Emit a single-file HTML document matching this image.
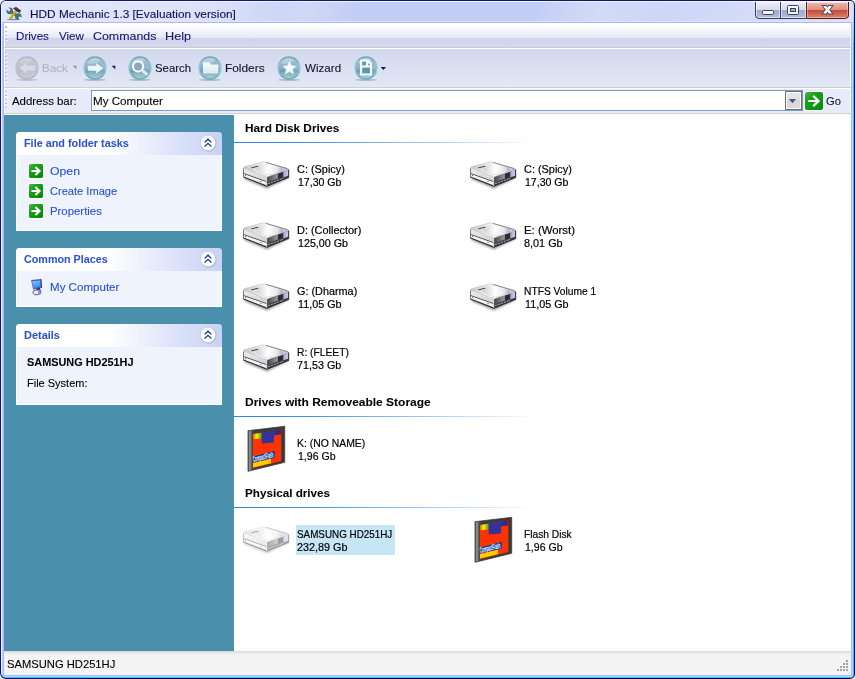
<!DOCTYPE html>
<html lang="en"><head><meta charset="utf-8"><title>HDD Mechanic 1.3 [Evaluation version]</title>
<style>
html,body{margin:0;padding:0}
body{width:855px;height:679px;position:relative;overflow:hidden;background:#fff;font-family:'Liberation Sans',sans-serif}
.a{position:absolute}
.t{position:absolute;white-space:pre;line-height:16px;transform-origin:0 0}
svg{position:absolute;overflow:visible}
.gd{position:absolute;width:2px;height:1px;background:#b9bbc8;box-shadow:1px 1px 0 #f6f7fc}
.ph{position:absolute;left:16px;width:206px;height:23px;background:linear-gradient(90deg,#fff 0%,#fff 45%,#e3e8fb 70%,#c8d2f5 100%);clip-path:polygon(2px 0,204px 0,206px 2px,206px 23px,0 23px,0 2px)}
.pb{position:absolute;left:16px;width:204px;background:#eef3fe;border:1px solid #fff;border-top:none}
.ln{position:absolute;left:234px;width:302px;height:1px;background:linear-gradient(90deg,#2f80e4 0%,#4590e8 25%,#a4caf5 65%,#fff 100%)}
.sd{position:absolute;width:2px;height:2px;background:#a2a2a8}
</style></head><body>
<div class="a" style="left:0px;top:0px;width:855px;height:679px;background:linear-gradient(135deg,#0a1c78 0%,#08186c 50%,#100848 50%,#100848 100%);border-radius:6px 5px 5px 6px"></div>
<div class="a" style="left:1px;top:1px;width:853px;height:677px;background:linear-gradient(180deg,#b8e4fc 0px,#98dafc 20px,#24c6ff 46px,#14c6ff 100%);border-radius:5px 4px 4px 5px"></div>
<div class="a" style="left:1px;top:1px;width:852px;height:676px;background:#f4f6ff;border-radius:5px 3px 3px 5px"></div>
<div class="a" style="left:2px;top:2px;width:851px;height:675px;background:#acb8f8;border-radius:4px 3px 3px 4px"></div>
<div class="a" style="left:2px;top:22px;width:1px;height:653px;background:#bcc6fc"></div>
<div class="a" style="left:852px;top:22px;width:1px;height:654px;background:#c8d0fc"></div>
<div class="a" style="left:3px;top:676px;width:849px;height:1px;background:#c8d0fc"></div>
<div class="a" style="left:2px;top:2px;width:851px;height:20px;border-radius:4px 3px 0 0;background:linear-gradient(90deg,#e2e6fa 0%,#e0e4f9 20%,#d9dff8 27%,#cad2f6 33%,#c3ccf6 40%,#c3ccf6 62%,#ccd4f7 75%,#d5dbf9 88%,#dadffa 100%)"></div>
<div class="a" style="left:2px;top:21px;width:851px;height:1px;background:#dde3fa"></div>
<div class="a" style="left:2px;top:2px;width:851px;height:19px;border-radius:3px 3px 0 0;background:linear-gradient(115deg,rgba(255,255,255,0) 0%,rgba(255,255,255,0) 30%,rgba(255,255,255,.18) 36%,rgba(255,255,255,0) 42%,rgba(255,255,255,0) 62%,rgba(255,255,255,.2) 70%,rgba(255,255,255,0) 78%)"></div>
<div class="a" style="left:4px;top:23px;width:847px;height:652px;background:#fff"></div>
<div class="a" style="left:5px;top:23px;width:845px;height:24px;background:linear-gradient(180deg,#fff 0px,#fdfdff 3px,#e4e8f4 15px,#cfd6eb 15px,#d1d8ec 24px)"></div>
<div class="a" style="left:4px;top:47px;width:847px;height:1px;background:#ccccc8"></div>
<div class="a" style="left:5px;top:49px;width:845px;height:38px;background:linear-gradient(180deg,#d2d8ec,#e3e8f7)"></div>
<div class="a" style="left:4px;top:87px;width:847px;height:1px;background:#d0d0d0"></div>
<div class="a" style="left:5px;top:89px;width:845px;height:24px;background:#e8ecfa"></div>
<div class="a" style="left:4px;top:113px;width:847px;height:1px;background:#d0d0d0"></div>
<div class="a" style="left:4px;top:115px;width:230px;height:536px;background:#4a90ac"></div>
<div class="a" style="left:4px;top:651px;width:847px;height:24px;background:linear-gradient(180deg,#d4d4d4 0px,#e6e6e6 1.5px,#f1f1f1 3.5px,#f4f4f4 5px,#f4f4f4 24px)"></div>
<div class="gd" style="left:5px;top:26px;height:2px"></div>
<div class="gd" style="left:5px;top:31px"></div>
<div class="gd" style="left:5px;top:35px"></div>
<div class="gd" style="left:5px;top:39px"></div>
<div class="gd" style="left:5px;top:52px"></div>
<div class="gd" style="left:5px;top:56px"></div>
<div class="gd" style="left:5px;top:60px"></div>
<div class="gd" style="left:5px;top:64px"></div>
<div class="gd" style="left:5px;top:68px"></div>
<div class="gd" style="left:5px;top:72px"></div>
<div class="gd" style="left:5px;top:76px"></div>
<div class="gd" style="left:5px;top:80px"></div>
<div class="gd" style="left:5px;top:91px"></div>
<div class="gd" style="left:5px;top:95px"></div>
<div class="gd" style="left:5px;top:99px"></div>
<div class="gd" style="left:5px;top:103px"></div>
<div class="gd" style="left:5px;top:107px"></div>
<div class="sd" style="left:846px;top:660px"></div>
<div class="sd" style="left:843px;top:663px"></div>
<div class="sd" style="left:846px;top:663px"></div>
<div class="sd" style="left:840px;top:666px"></div>
<div class="sd" style="left:843px;top:666px"></div>
<div class="sd" style="left:846px;top:666px"></div>
<div class="sd" style="left:837px;top:669px"></div>
<div class="sd" style="left:840px;top:669px"></div>
<div class="sd" style="left:843px;top:669px"></div>
<div class="sd" style="left:846px;top:669px"></div>
<div class="a" style="left:91px;top:90px;width:712px;height:21px;box-sizing:border-box;border:1px solid #7b9cc4;background:#fff"></div>
<div class="a" style="left:785px;top:91px;width:17px;height:19px;box-sizing:border-box;border:1px solid #6e6e72;background:linear-gradient(180deg,#e6e6e6 0%,#e0e0e0 50%,#d6d6d6 50%,#dcdcdc 100%);box-shadow:inset 0 0 0 1px #fff"></div>
<svg style="left:785px;top:91px" width="17" height="19"><path d="M3.9 8.1 L11.1 8.1 L7.5 12.3 Z" fill="#485888"/></svg>
<svg style="left:0;top:0" width="855" height="24" viewBox="0 0 855 24">
<defs>
<linearGradient id="cbA" x1="0" y1="0" x2="0" y2="1"><stop offset="0" stop-color="#eceef6"/><stop offset="0.5" stop-color="#d6dae9"/><stop offset="0.5" stop-color="#9fa8c9"/><stop offset="1" stop-color="#b6bedb"/></linearGradient>
<linearGradient id="cbC" x1="0" y1="0" x2="0" y2="1"><stop offset="0" stop-color="#f0b8ac"/><stop offset="0.5" stop-color="#de8e7e"/><stop offset="0.5" stop-color="#c24a32"/><stop offset="1" stop-color="#dc8470"/></linearGradient>
<clipPath id="cbclip"><path d="M755 2 H849 V15 Q849 19 845 19 H759 Q755 19 755 15 Z"/></clipPath>
</defs>
<g clip-path="url(#cbclip)">
<rect x="755" y="2" width="51" height="16" fill="url(#cbA)"/>
<rect x="806" y="2" width="43" height="16" fill="url(#cbC)"/>
<rect x="756.5" y="1.5" width="23" height="16" fill="none" stroke="#fff" stroke-opacity=".55"/>
<rect x="781.5" y="1.5" width="24" height="16" fill="none" stroke="#fff" stroke-opacity=".55"/>
<rect x="807.5" y="1.5" width="40" height="16" fill="none" stroke="#fff" stroke-opacity=".35"/>
<rect x="756" y="2" width="92" height="1" fill="#fff" opacity=".6"/>
</g>
<path d="M755.5 2 V15 Q755.5 18.5 759 18.5 H806" fill="none" stroke="#3a3e58" stroke-width="1"/>
<path d="M780.5 2 V18" stroke="#3a3e58" stroke-width="1"/>
<path d="M806.5 2 V18.5 H845 Q848.5 18.5 848.5 15 V2" fill="none" stroke="#5a1c14" stroke-width="1"/>
<!-- min glyph -->
<rect x="762.5" y="10.5" width="11" height="4" rx="1" fill="#f6f5ec" stroke="#3a4060"/>
<!-- max glyph -->
<rect x="787.5" y="5.5" width="11" height="9" rx="1" fill="#fafafa" stroke="#3a4060"/>
<rect x="790.5" y="8.5" width="5" height="3" fill="#a4acd0" stroke="#3a4060"/>
<!-- close glyph -->
<clipPath id="xclip"><rect x="819" y="5" width="18" height="9.6"/></clipPath><clipPath id="xclip2"><rect x="819" y="6" width="18" height="7.6"/></clipPath>
<g clip-path="url(#xclip)"><path d="M823 4 L832 15.4 M832 4 L823 15.4" stroke="#44465e" stroke-width="4.3"/></g>
<g clip-path="url(#xclip2)"><path d="M823 4 L832 15.4 M832 4 L823 15.4" stroke="#fff" stroke-width="2.5"/></g>
</svg>
<svg style="left:4px;top:4px" width="20" height="18" viewBox="4 4 20 18">
<defs><linearGradient id="hh" x1="0" y1="0" x2="1" y2="1"><stop offset="0" stop-color="#e8c030"/><stop offset=".5" stop-color="#d2a512"/><stop offset="1" stop-color="#a88408"/></linearGradient></defs>
<ellipse cx="13.4" cy="19.5" rx="6.8" ry=".7" fill="#4a6a9c" opacity=".7"/>
<!-- wrench -->
<g fill="#3e7282"><circle cx="9.7" cy="10.8" r="3.35"/><circle cx="18.3" cy="16.5" r="3.3"/><path d="M9.7 10.8 L18.3 16.5" stroke="#3e7282" stroke-width="2.7"/></g>
<g fill="#e1e5fa"><rect x="-1.35" y="-.6" width="2.7" height="5.4" rx="1.2" transform="translate(9.4,10.4) rotate(135)"/><rect x="-1.25" y="-.2" width="2.5" height="5" rx="1.1" transform="translate(18.9,17.2) rotate(-52)"/></g>
<!-- hammer handle -->
<path d="M15.3 10 L17.6 11.3 L11 19.6 L8.8 18.6 Z" fill="url(#hh)"/>
<!-- hammer head -->
<path d="M13.1 8.3 L16 6.9 L21.1 10.6 L19.7 12.9 L16.5 11.2 L14.7 9.7 Z" fill="#3a3a3a"/>
<path d="M13.6 8.2 L16 7.1 L18 8.6" fill="none" stroke="#6a6a6a" stroke-width=".5"/>
</svg>
<svg style="left:13px;top:53.5px" width="28" height="28" viewBox="13 53.5 28 28">
<defs>
<linearGradient id="rgb" x1="0" y1="0" x2="1" y2="0"><stop offset="0" stop-color="#c3c5d2"/><stop offset=".22" stop-color="#b5b7c4"/><stop offset=".78" stop-color="#b5b7c4"/><stop offset="1" stop-color="#c3c5d2"/></linearGradient>
<linearGradient id="igb" x1="0" y1="0" x2="0" y2="1"><stop offset="0" stop-color="#c6c8d3"/><stop offset=".52" stop-color="#bec0cc"/><stop offset=".64" stop-color="#b9bbc8"/><stop offset="1" stop-color="#c4c6d2"/></linearGradient>
<clipPath id="icb"><circle cx="27" cy="67.5" r="10"/></clipPath>
</defs>
<ellipse cx="27" cy="79.4" rx="11" ry=".8" fill="#b9bdca"/>
<circle cx="27" cy="67.5" r="11.8" fill="url(#rgb)"/>
<circle cx="27" cy="67.5" r="10.3" fill="url(#igb)"/>
<g clip-path="url(#icb)"><ellipse cx="23.5" cy="58.0" rx="9" ry="5.2" fill="#fff" opacity=".12"/>
<path d="M16 74.5 L38 62.5 L38 78.5 L16 78.5 Z" fill="#fff" opacity=".10"/></g>
<path d="M19.5 67.7 L26.6 62.3 L26.6 65.1 L35 65.1 L35 70.1 L26.6 70.1 L26.6 73.1 Z" fill="#d8dae4"/>
</svg>
<svg style="left:72px;top:65px" width="6" height="6"><path d="M0.8 0.8 L4.4 0.8 L4.4 4.2 Z" fill="#8c8c98"/></svg>
<svg style="left:81px;top:53.5px" width="28" height="28" viewBox="81 53.5 28 28">
<defs>
<linearGradient id="rgf" x1="0" y1="0" x2="1" y2="0"><stop offset="0" stop-color="#9cd4de"/><stop offset=".22" stop-color="#73acb9"/><stop offset=".78" stop-color="#73acb9"/><stop offset="1" stop-color="#9cd4de"/></linearGradient>
<linearGradient id="igf" x1="0" y1="0" x2="0" y2="1"><stop offset="0" stop-color="#a4c3d5"/><stop offset=".52" stop-color="#8eaec6"/><stop offset=".64" stop-color="#6a9fb4"/><stop offset="1" stop-color="#9ac8d2"/></linearGradient>
<clipPath id="icf"><circle cx="95" cy="67.5" r="10"/></clipPath>
</defs>
<ellipse cx="95" cy="79.4" rx="11" ry=".8" fill="#9cb6be"/>
<circle cx="95" cy="67.5" r="11.8" fill="url(#rgf)"/>
<circle cx="95" cy="67.5" r="10.3" fill="url(#igf)"/>
<g clip-path="url(#icf)"><ellipse cx="91.5" cy="58.0" rx="9" ry="5.2" fill="#fff" opacity=".26"/>
<path d="M84 74.5 L106 62.5 L106 78.5 L84 78.5 Z" fill="#fff" opacity=".10"/></g>
<path d="M103.3 67.7 L96.2 62.5 L96.2 65.2 L87.8 65.2 L87.8 70.2 L96.2 70.2 L96.2 73.0 Z" fill="#f0f6f8"/>
</svg>
<svg style="left:111px;top:65px" width="6" height="6"><path d="M0.6 0.8 L4.3 0.8 L4.3 4.3 Z" fill="#14145c"/></svg>
<svg style="left:125.9px;top:53.5px" width="28" height="28" viewBox="125.9 53.5 28 28">
<defs>
<linearGradient id="rgs" x1="0" y1="0" x2="1" y2="0"><stop offset="0" stop-color="#9cd4de"/><stop offset=".22" stop-color="#73acb9"/><stop offset=".78" stop-color="#73acb9"/><stop offset="1" stop-color="#9cd4de"/></linearGradient>
<linearGradient id="igs" x1="0" y1="0" x2="0" y2="1"><stop offset="0" stop-color="#a4c3d5"/><stop offset=".52" stop-color="#8eaec6"/><stop offset=".64" stop-color="#6a9fb4"/><stop offset="1" stop-color="#9ac8d2"/></linearGradient>
<clipPath id="ics"><circle cx="139.9" cy="67.5" r="10"/></clipPath>
</defs>
<ellipse cx="139.9" cy="79.4" rx="11" ry=".8" fill="#9cb6be"/>
<circle cx="139.9" cy="67.5" r="11.8" fill="url(#rgs)"/>
<circle cx="139.9" cy="67.5" r="10.3" fill="url(#igs)"/>
<g clip-path="url(#ics)"><ellipse cx="136.4" cy="58.0" rx="9" ry="5.2" fill="#fff" opacity=".26"/>
<path d="M128.9 74.5 L150.9 62.5 L150.9 78.5 L128.9 78.5 Z" fill="#fff" opacity=".10"/></g>
<circle cx="138.0" cy="65.9" r="5.05" fill="#86a7c3" stroke="#f8fbfc" stroke-width="2.1"/><path d="M142.5 70.1 L147.1 74.3" stroke="#dcecf0" stroke-width="2.9" stroke-linecap="butt"/>
</svg>
<svg style="left:195.9px;top:53.5px" width="28" height="28" viewBox="195.9 53.5 28 28">
<defs>
<linearGradient id="rgo" x1="0" y1="0" x2="1" y2="0"><stop offset="0" stop-color="#9cd4de"/><stop offset=".22" stop-color="#73acb9"/><stop offset=".78" stop-color="#73acb9"/><stop offset="1" stop-color="#9cd4de"/></linearGradient>
<linearGradient id="igo" x1="0" y1="0" x2="0" y2="1"><stop offset="0" stop-color="#a4c3d5"/><stop offset=".52" stop-color="#8eaec6"/><stop offset=".64" stop-color="#6a9fb4"/><stop offset="1" stop-color="#9ac8d2"/></linearGradient>
<clipPath id="ico"><circle cx="209.9" cy="67.5" r="10"/></clipPath>
</defs>
<ellipse cx="209.9" cy="79.4" rx="11" ry=".8" fill="#9cb6be"/>
<circle cx="209.9" cy="67.5" r="11.8" fill="url(#rgo)"/>
<circle cx="209.9" cy="67.5" r="10.3" fill="url(#igo)"/>
<g clip-path="url(#ico)"><ellipse cx="206.4" cy="58.0" rx="9" ry="5.2" fill="#fff" opacity=".26"/>
<path d="M198.9 74.5 L220.9 62.5 L220.9 78.5 L198.9 78.5 Z" fill="#fff" opacity=".10"/></g>
<defs><linearGradient id="fo" x1="0" y1="0" x2="0" y2="1"><stop offset="0" stop-color="#f8fbfc"/><stop offset="1" stop-color="#dde9ed"/></linearGradient></defs><path d="M202.9 62.1 L209.3 62.1 L211.1 64.0 L218.1 64.0 L218.1 72.9 L202.9 72.9 Z" fill="url(#fo)"/>
</svg>
<svg style="left:274.9px;top:53.5px" width="28" height="28" viewBox="274.9 53.5 28 28">
<defs>
<linearGradient id="rgw" x1="0" y1="0" x2="1" y2="0"><stop offset="0" stop-color="#9cd4de"/><stop offset=".22" stop-color="#73acb9"/><stop offset=".78" stop-color="#73acb9"/><stop offset="1" stop-color="#9cd4de"/></linearGradient>
<linearGradient id="igw" x1="0" y1="0" x2="0" y2="1"><stop offset="0" stop-color="#a4c3d5"/><stop offset=".52" stop-color="#8eaec6"/><stop offset=".64" stop-color="#6a9fb4"/><stop offset="1" stop-color="#9ac8d2"/></linearGradient>
<clipPath id="icw"><circle cx="288.9" cy="67.5" r="10"/></clipPath>
</defs>
<ellipse cx="288.9" cy="79.4" rx="11" ry=".8" fill="#9cb6be"/>
<circle cx="288.9" cy="67.5" r="11.8" fill="url(#rgw)"/>
<circle cx="288.9" cy="67.5" r="10.3" fill="url(#igw)"/>
<g clip-path="url(#icw)"><ellipse cx="285.4" cy="58.0" rx="9" ry="5.2" fill="#fff" opacity=".26"/>
<path d="M277.9 74.5 L299.9 62.5 L299.9 78.5 L277.9 78.5 Z" fill="#fff" opacity=".10"/></g>
<polygon points="289.35,61.10 291.26,65.17 295.72,65.73 292.44,68.80 293.29,73.22 289.35,71.05 285.41,73.22 286.26,68.80 282.98,65.73 287.44,65.17" fill="#f2f7f9" stroke="#f2f7f9" stroke-width=".6" stroke-linejoin="round"/>
</svg>
<svg style="left:351.9px;top:53.5px" width="28" height="28" viewBox="351.9 53.5 28 28">
<defs>
<linearGradient id="rgv" x1="0" y1="0" x2="1" y2="0"><stop offset="0" stop-color="#9cd4de"/><stop offset=".22" stop-color="#73acb9"/><stop offset=".78" stop-color="#73acb9"/><stop offset="1" stop-color="#9cd4de"/></linearGradient>
<linearGradient id="igv" x1="0" y1="0" x2="0" y2="1"><stop offset="0" stop-color="#a4c3d5"/><stop offset=".52" stop-color="#8eaec6"/><stop offset=".64" stop-color="#6a9fb4"/><stop offset="1" stop-color="#9ac8d2"/></linearGradient>
<clipPath id="icv"><circle cx="365.9" cy="67.5" r="10"/></clipPath>
</defs>
<ellipse cx="365.9" cy="79.4" rx="11" ry=".8" fill="#9cb6be"/>
<circle cx="365.9" cy="67.5" r="11.8" fill="url(#rgv)"/>
<circle cx="365.9" cy="67.5" r="10.3" fill="url(#igv)"/>
<g clip-path="url(#icv)"><ellipse cx="362.4" cy="58.0" rx="9" ry="5.2" fill="#fff" opacity=".26"/>
<path d="M354.9 74.5 L376.9 62.5 L376.9 78.5 L354.9 78.5 Z" fill="#fff" opacity=".10"/></g>
<path d="M359.9 58.9 L368.29999999999995 58.9 L371.9 62.4 L371.9 74.9 L359.9 74.9 Z" fill="#f4f8fa"/><rect x="362.09999999999997" y="61.1" width="3.8" height="3.8" fill="#6098ac"/><rect x="367.9" y="63.1" width="2.1" height="1.9" fill="#88a8c0"/><rect x="362.09999999999997" y="67.1" width="7.8" height="5.8" fill="#5c98ac"/>
</svg>
<svg style="left:380px;top:66px" width="7" height="5"><path d="M0.7 1.1 L6 1.1 L3.35 4.1 Z" fill="#14145c"/></svg>
<svg style="left:805px;top:92px" width="18" height="18" viewBox="0 0 16 16">
<defs><linearGradient id="gggo" x1="0" y1="0" x2="1" y2="1"><stop offset="0" stop-color="#52b452"/><stop offset=".35" stop-color="#18a018"/><stop offset="1" stop-color="#068806"/></linearGradient></defs>
<rect x="-0.71" y="-0.71" width="17.42" height="17.42" rx="2.6" fill="#fff" opacity=".85"/>
<rect x="0" y="0" width="16" height="16" rx="1.7" fill="url(#gggo)"/>
<path d="M2.8 8 L11.8 8" stroke="#fff" stroke-width="1.7"/><path d="M7.3 3.5 L12 8 L7.3 12.5" fill="none" stroke="#fff" stroke-width="2.0"/>
</svg>
<div class="ph" style="top:132px"></div>
<div class="pb" style="top:155px;height:75px"></div>
<svg style="left:197.7px;top:133.2px" width="20" height="20" viewBox="197.7 133.2 20 20">
<circle cx="208.2" cy="143.89999999999998" r="8" fill="#9aa0c8" opacity=".6"/>
<circle cx="207.7" cy="143.2" r="7.6" fill="#fff" stroke="#c0c4e0" stroke-width=".5"/>
<path d="M204.29999999999998 142.6 L207.7 139.39999999999998 L211.1 142.6 M204.29999999999998 146.79999999999998 L207.7 143.6 L211.1 146.79999999999998" fill="none" stroke="#10309c" stroke-width="1.3"/>
</svg>
<div class="ph" style="top:248px"></div>
<div class="pb" style="top:271px;height:35px"></div>
<svg style="left:197.7px;top:249.2px" width="20" height="20" viewBox="197.7 249.2 20 20">
<circle cx="208.2" cy="259.9" r="8" fill="#9aa0c8" opacity=".6"/>
<circle cx="207.7" cy="259.2" r="7.6" fill="#fff" stroke="#c0c4e0" stroke-width=".5"/>
<path d="M204.29999999999998 258.59999999999997 L207.7 255.39999999999998 L211.1 258.59999999999997 M204.29999999999998 262.8 L207.7 259.59999999999997 L211.1 262.8" fill="none" stroke="#10309c" stroke-width="1.3"/>
</svg>
<div class="ph" style="top:324px"></div>
<div class="pb" style="top:347px;height:57px"></div>
<svg style="left:197.7px;top:325.2px" width="20" height="20" viewBox="197.7 325.2 20 20">
<circle cx="208.2" cy="335.9" r="8" fill="#9aa0c8" opacity=".6"/>
<circle cx="207.7" cy="335.2" r="7.6" fill="#fff" stroke="#c0c4e0" stroke-width=".5"/>
<path d="M204.29999999999998 334.59999999999997 L207.7 331.4 L211.1 334.59999999999997 M204.29999999999998 338.8 L207.7 335.59999999999997 L211.1 338.8" fill="none" stroke="#10309c" stroke-width="1.3"/>
</svg>
<svg style="left:29px;top:164px" width="14" height="14" viewBox="0 0 16 16">
<defs><linearGradient id="ggp0" x1="0" y1="0" x2="1" y2="1"><stop offset="0" stop-color="#52b452"/><stop offset=".35" stop-color="#18a018"/><stop offset="1" stop-color="#068806"/></linearGradient></defs>
<rect x="-1.14" y="-1.14" width="18.29" height="18.29" rx="2.6" fill="#fff" opacity=".85"/>
<rect x="0" y="0" width="16" height="16" rx="1.7" fill="url(#ggp0)"/>
<path d="M2.8 8 L11.8 8" stroke="#fff" stroke-width="2.3"/><path d="M7.3 3.5 L12 8 L7.3 12.5" fill="none" stroke="#fff" stroke-width="2.5"/>
</svg>
<svg style="left:29px;top:184px" width="14" height="14" viewBox="0 0 16 16">
<defs><linearGradient id="ggp1" x1="0" y1="0" x2="1" y2="1"><stop offset="0" stop-color="#52b452"/><stop offset=".35" stop-color="#18a018"/><stop offset="1" stop-color="#068806"/></linearGradient></defs>
<rect x="-1.14" y="-1.14" width="18.29" height="18.29" rx="2.6" fill="#fff" opacity=".85"/>
<rect x="0" y="0" width="16" height="16" rx="1.7" fill="url(#ggp1)"/>
<path d="M2.8 8 L11.8 8" stroke="#fff" stroke-width="2.3"/><path d="M7.3 3.5 L12 8 L7.3 12.5" fill="none" stroke="#fff" stroke-width="2.5"/>
</svg>
<svg style="left:29px;top:204px" width="14" height="14" viewBox="0 0 16 16">
<defs><linearGradient id="ggp2" x1="0" y1="0" x2="1" y2="1"><stop offset="0" stop-color="#52b452"/><stop offset=".35" stop-color="#18a018"/><stop offset="1" stop-color="#068806"/></linearGradient></defs>
<rect x="-1.14" y="-1.14" width="18.29" height="18.29" rx="2.6" fill="#fff" opacity=".85"/>
<rect x="0" y="0" width="16" height="16" rx="1.7" fill="url(#ggp2)"/>
<path d="M2.8 8 L11.8 8" stroke="#fff" stroke-width="2.3"/><path d="M7.3 3.5 L12 8 L7.3 12.5" fill="none" stroke="#fff" stroke-width="2.5"/>
</svg>
<svg style="left:29px;top:277px" width="16" height="20" viewBox="29 277 16 20">
<defs><linearGradient id="mcs" x1="0" y1="0" x2=".4" y2="1"><stop offset="0" stop-color="#b0e8ff"/><stop offset=".35" stop-color="#58b4ff"/><stop offset="1" stop-color="#2c90f8"/></linearGradient></defs>
<path d="M31.1 280 L41.1 279.1 L41.9 287.6 L33.1 289.4 Z" fill="#5c5ca4"/>
<path d="M40.3 279.2 L41.3 279.1 L42 287.6 L41 287.9 Z" fill="#352c68"/>
<path d="M32 281.4 L40.2 280.4 L40.7 286.3 L33.8 288.6 Z" fill="url(#mcs)"/>
<path d="M36.4 288 L40.2 287.4 L40.4 291 L36.6 291 Z" fill="#3c3c8c"/>
<path d="M33 291.6 Q33.2 290.1 36 290 L39 289.9 L40.6 290.2 L40.7 293.6 Q38 295.3 34.6 294.7 Q32.6 293.6 33 291.6 Z" fill="#e4e4ee" stroke="#40306c" stroke-width=".8"/>
<path d="M38 290.4 L40.4 290.3 L40.5 293.4 L38.4 294.4 Z" fill="#8c8cc0"/>
</svg>
<div class="ln" style="top:142px"></div>
<div class="ln" style="top:416px"></div>
<div class="ln" style="top:507px"></div>
<div class="a" style="left:296px;top:525px;width:99px;height:30px;background:#c6e6f6"></div>
<svg style="left:242px;top:150px" width="48" height="48" viewBox="0 0 48 48">
<defs>
<linearGradient id="hth0" x1="0" y1="0" x2="1" y2="0"><stop offset="0" stop-color="#c4c4c4"/><stop offset=".3" stop-color="#e4e4e4"/><stop offset=".55" stop-color="#ffffff"/><stop offset=".8" stop-color="#e0e0e4"/><stop offset="1" stop-color="#b8b8c4"/></linearGradient>
<linearGradient id="hph0" x1="0" y1="0" x2="1" y2="0"><stop offset="0" stop-color="#d0d0d0"/><stop offset=".45" stop-color="#ffffff"/><stop offset=".8" stop-color="#e8e8ec"/><stop offset="1" stop-color="#b0b0d0"/></linearGradient>
<linearGradient id="hlh0" x1="0" y1="0" x2="0" y2="1"><stop offset="0" stop-color="#f0f0f0"/><stop offset="1" stop-color="#c4c4c4"/></linearGradient>
<linearGradient id="hdh0" x1="0" y1="0" x2="1" y2="0"><stop offset="0" stop-color="#464646"/><stop offset=".5" stop-color="#707070"/><stop offset="1" stop-color="#9c9c9c"/></linearGradient><linearGradient id="hvh0" x1="0" y1="0" x2="1" y2="0"><stop offset="0" stop-color="#9a9ad6"/><stop offset="1" stop-color="#d6d6f6"/></linearGradient>
<filter id="hbh0" x="-20%" y="-20%" width="140%" height="140%"><feGaussianBlur stdDeviation="1.1"/></filter>
<clipPath id="hch0"><path d="M1.6 18 Q1.6 17 3 16.6 L20 12.2 Q21.6 11.8 23 12.2 L45.4 18.6 Q46.8 19.2 45.6 19.8 L25.8 26.6 Q24.6 27 23.4 26.6 Z"/></clipPath>
</defs>
<path d="M3 26.5 L25 35.5 L46.5 26 L46.5 28 L25 38.6 L2 29 Z" fill="#000" opacity=".4" filter="url(#hbh0)"/>
<!-- left face -->
<path d="M1.4 18 L24.7 26.7 L24.7 36.2 L1.4 27.2 Z" fill="url(#hlh0)"/>
<path d="M1.4 23 L24.7 31.3 L24.7 32.2 L1.4 23.9 Z" fill="#484848"/>
<path d="M1.4 23.9 L24.7 32.2 L24.7 35.4 L1.4 26.4 Z" fill="#f2f2f2"/>
<!-- right face -->
<path d="M24.7 26.7 L46.9 19.3 L46.9 27.2 L24.7 36.2 Z" fill="#3c3c3c"/>
<path d="M25.4 27.2 L35.8 23.7 L35.8 28.4 L25.6 32.2 Z" fill="url(#hdh0)"/>
<path d="M36.2 23.4 L40.7 21.9 L40.7 26.7 L36.2 28.2 Z" fill="#2c2c2c"/>
<path d="M41.2 21.7 L45.9 20 L45.9 25.8 L41.2 27.6 Z" fill="url(#hvh0)"/>
<path d="M25.8 33.2 L41 28.1 L41 29 L25.8 34.2 Z" fill="#a4a4d8"/>
<path d="M28 32.3 l.9 -.3 l0 1.4 l-.9 .3 Z M31 31.3 l.9 -.3 l0 1.4 l-.9 .3 Z M34 30.3 l.9 -.3 l0 1.4 l-.9 .3 Z M37 29.3 l.9 -.3 l0 1.4 l-.9 .3 Z" fill="#3c3c3c"/>
<!-- top face -->
<path d="M1.6 18 Q1.6 17 3 16.6 L20 12.2 Q21.6 11.8 23 12.2 L45.4 18.6 Q46.8 19.2 45.6 19.8 L25.8 26.6 Q24.6 27 23.4 26.6 Z" fill="url(#hth0)"/>
<g clip-path="url(#hch0)"><ellipse cx="28.3" cy="19.5" rx="13" ry="5.4" fill="#a8a8cc" opacity=".55" transform="rotate(4 27.5 19.2)"/><ellipse cx="27.3" cy="19.1" rx="13" ry="5.4" fill="url(#hph0)" transform="rotate(4 27.5 19.2)"/></g>
<path d="M1.6 18 Q1.6 17 3 16.6 L20 12.2 Q21.6 11.8 23 12.2 L45.4 18.6 Q46.8 19.2 45.6 19.8 L25.8 26.6 Q24.6 27 23.4 26.6 Z" fill="none" stroke="#c4c4c8" stroke-width=".7"/>
<path d="M9 17.6 L15.8 15.8 L16.6 16.4 L9.8 18.3 Z" fill="#3c3c3c"/>
<!-- outlines -->
<path d="M1.4 27 L24.7 36.1 L46.9 27.2" fill="none" stroke="#303030" stroke-width="1.2" stroke-linejoin="round"/><path d="M1.5 18.4 L1.5 27" fill="none" stroke="#5a5a5a" stroke-width=".8"/><path d="M46.7 19.6 L46.7 27" stroke="#3c3c3c" stroke-width=".9"/><path d="M24 12.4 L45.6 18.7" stroke="#6a6a6a" stroke-width=".7"/>
<path d="M24.7 27 L24.7 36" stroke="#e8e8f8" stroke-width=".8"/>
<circle cx="3.4" cy="25.4" r=".5" fill="#333"/><circle cx="19" cy="31.6" r=".5" fill="#333"/><circle cx="23.6" cy="25.6" r=".4" fill="#777"/>
</svg>
<svg style="left:469px;top:150px" width="48" height="48" viewBox="0 0 48 48">
<defs>
<linearGradient id="hth1" x1="0" y1="0" x2="1" y2="0"><stop offset="0" stop-color="#c4c4c4"/><stop offset=".3" stop-color="#e4e4e4"/><stop offset=".55" stop-color="#ffffff"/><stop offset=".8" stop-color="#e0e0e4"/><stop offset="1" stop-color="#b8b8c4"/></linearGradient>
<linearGradient id="hph1" x1="0" y1="0" x2="1" y2="0"><stop offset="0" stop-color="#d0d0d0"/><stop offset=".45" stop-color="#ffffff"/><stop offset=".8" stop-color="#e8e8ec"/><stop offset="1" stop-color="#b0b0d0"/></linearGradient>
<linearGradient id="hlh1" x1="0" y1="0" x2="0" y2="1"><stop offset="0" stop-color="#f0f0f0"/><stop offset="1" stop-color="#c4c4c4"/></linearGradient>
<linearGradient id="hdh1" x1="0" y1="0" x2="1" y2="0"><stop offset="0" stop-color="#464646"/><stop offset=".5" stop-color="#707070"/><stop offset="1" stop-color="#9c9c9c"/></linearGradient><linearGradient id="hvh1" x1="0" y1="0" x2="1" y2="0"><stop offset="0" stop-color="#9a9ad6"/><stop offset="1" stop-color="#d6d6f6"/></linearGradient>
<filter id="hbh1" x="-20%" y="-20%" width="140%" height="140%"><feGaussianBlur stdDeviation="1.1"/></filter>
<clipPath id="hch1"><path d="M1.6 18 Q1.6 17 3 16.6 L20 12.2 Q21.6 11.8 23 12.2 L45.4 18.6 Q46.8 19.2 45.6 19.8 L25.8 26.6 Q24.6 27 23.4 26.6 Z"/></clipPath>
</defs>
<path d="M3 26.5 L25 35.5 L46.5 26 L46.5 28 L25 38.6 L2 29 Z" fill="#000" opacity=".4" filter="url(#hbh1)"/>
<!-- left face -->
<path d="M1.4 18 L24.7 26.7 L24.7 36.2 L1.4 27.2 Z" fill="url(#hlh1)"/>
<path d="M1.4 23 L24.7 31.3 L24.7 32.2 L1.4 23.9 Z" fill="#484848"/>
<path d="M1.4 23.9 L24.7 32.2 L24.7 35.4 L1.4 26.4 Z" fill="#f2f2f2"/>
<!-- right face -->
<path d="M24.7 26.7 L46.9 19.3 L46.9 27.2 L24.7 36.2 Z" fill="#3c3c3c"/>
<path d="M25.4 27.2 L35.8 23.7 L35.8 28.4 L25.6 32.2 Z" fill="url(#hdh1)"/>
<path d="M36.2 23.4 L40.7 21.9 L40.7 26.7 L36.2 28.2 Z" fill="#2c2c2c"/>
<path d="M41.2 21.7 L45.9 20 L45.9 25.8 L41.2 27.6 Z" fill="url(#hvh1)"/>
<path d="M25.8 33.2 L41 28.1 L41 29 L25.8 34.2 Z" fill="#a4a4d8"/>
<path d="M28 32.3 l.9 -.3 l0 1.4 l-.9 .3 Z M31 31.3 l.9 -.3 l0 1.4 l-.9 .3 Z M34 30.3 l.9 -.3 l0 1.4 l-.9 .3 Z M37 29.3 l.9 -.3 l0 1.4 l-.9 .3 Z" fill="#3c3c3c"/>
<!-- top face -->
<path d="M1.6 18 Q1.6 17 3 16.6 L20 12.2 Q21.6 11.8 23 12.2 L45.4 18.6 Q46.8 19.2 45.6 19.8 L25.8 26.6 Q24.6 27 23.4 26.6 Z" fill="url(#hth1)"/>
<g clip-path="url(#hch1)"><ellipse cx="28.3" cy="19.5" rx="13" ry="5.4" fill="#a8a8cc" opacity=".55" transform="rotate(4 27.5 19.2)"/><ellipse cx="27.3" cy="19.1" rx="13" ry="5.4" fill="url(#hph1)" transform="rotate(4 27.5 19.2)"/></g>
<path d="M1.6 18 Q1.6 17 3 16.6 L20 12.2 Q21.6 11.8 23 12.2 L45.4 18.6 Q46.8 19.2 45.6 19.8 L25.8 26.6 Q24.6 27 23.4 26.6 Z" fill="none" stroke="#c4c4c8" stroke-width=".7"/>
<path d="M9 17.6 L15.8 15.8 L16.6 16.4 L9.8 18.3 Z" fill="#3c3c3c"/>
<!-- outlines -->
<path d="M1.4 27 L24.7 36.1 L46.9 27.2" fill="none" stroke="#303030" stroke-width="1.2" stroke-linejoin="round"/><path d="M1.5 18.4 L1.5 27" fill="none" stroke="#5a5a5a" stroke-width=".8"/><path d="M46.7 19.6 L46.7 27" stroke="#3c3c3c" stroke-width=".9"/><path d="M24 12.4 L45.6 18.7" stroke="#6a6a6a" stroke-width=".7"/>
<path d="M24.7 27 L24.7 36" stroke="#e8e8f8" stroke-width=".8"/>
<circle cx="3.4" cy="25.4" r=".5" fill="#333"/><circle cx="19" cy="31.6" r=".5" fill="#333"/><circle cx="23.6" cy="25.6" r=".4" fill="#777"/>
</svg>
<svg style="left:242px;top:211px" width="48" height="48" viewBox="0 0 48 48">
<defs>
<linearGradient id="hth2" x1="0" y1="0" x2="1" y2="0"><stop offset="0" stop-color="#c4c4c4"/><stop offset=".3" stop-color="#e4e4e4"/><stop offset=".55" stop-color="#ffffff"/><stop offset=".8" stop-color="#e0e0e4"/><stop offset="1" stop-color="#b8b8c4"/></linearGradient>
<linearGradient id="hph2" x1="0" y1="0" x2="1" y2="0"><stop offset="0" stop-color="#d0d0d0"/><stop offset=".45" stop-color="#ffffff"/><stop offset=".8" stop-color="#e8e8ec"/><stop offset="1" stop-color="#b0b0d0"/></linearGradient>
<linearGradient id="hlh2" x1="0" y1="0" x2="0" y2="1"><stop offset="0" stop-color="#f0f0f0"/><stop offset="1" stop-color="#c4c4c4"/></linearGradient>
<linearGradient id="hdh2" x1="0" y1="0" x2="1" y2="0"><stop offset="0" stop-color="#464646"/><stop offset=".5" stop-color="#707070"/><stop offset="1" stop-color="#9c9c9c"/></linearGradient><linearGradient id="hvh2" x1="0" y1="0" x2="1" y2="0"><stop offset="0" stop-color="#9a9ad6"/><stop offset="1" stop-color="#d6d6f6"/></linearGradient>
<filter id="hbh2" x="-20%" y="-20%" width="140%" height="140%"><feGaussianBlur stdDeviation="1.1"/></filter>
<clipPath id="hch2"><path d="M1.6 18 Q1.6 17 3 16.6 L20 12.2 Q21.6 11.8 23 12.2 L45.4 18.6 Q46.8 19.2 45.6 19.8 L25.8 26.6 Q24.6 27 23.4 26.6 Z"/></clipPath>
</defs>
<path d="M3 26.5 L25 35.5 L46.5 26 L46.5 28 L25 38.6 L2 29 Z" fill="#000" opacity=".4" filter="url(#hbh2)"/>
<!-- left face -->
<path d="M1.4 18 L24.7 26.7 L24.7 36.2 L1.4 27.2 Z" fill="url(#hlh2)"/>
<path d="M1.4 23 L24.7 31.3 L24.7 32.2 L1.4 23.9 Z" fill="#484848"/>
<path d="M1.4 23.9 L24.7 32.2 L24.7 35.4 L1.4 26.4 Z" fill="#f2f2f2"/>
<!-- right face -->
<path d="M24.7 26.7 L46.9 19.3 L46.9 27.2 L24.7 36.2 Z" fill="#3c3c3c"/>
<path d="M25.4 27.2 L35.8 23.7 L35.8 28.4 L25.6 32.2 Z" fill="url(#hdh2)"/>
<path d="M36.2 23.4 L40.7 21.9 L40.7 26.7 L36.2 28.2 Z" fill="#2c2c2c"/>
<path d="M41.2 21.7 L45.9 20 L45.9 25.8 L41.2 27.6 Z" fill="url(#hvh2)"/>
<path d="M25.8 33.2 L41 28.1 L41 29 L25.8 34.2 Z" fill="#a4a4d8"/>
<path d="M28 32.3 l.9 -.3 l0 1.4 l-.9 .3 Z M31 31.3 l.9 -.3 l0 1.4 l-.9 .3 Z M34 30.3 l.9 -.3 l0 1.4 l-.9 .3 Z M37 29.3 l.9 -.3 l0 1.4 l-.9 .3 Z" fill="#3c3c3c"/>
<!-- top face -->
<path d="M1.6 18 Q1.6 17 3 16.6 L20 12.2 Q21.6 11.8 23 12.2 L45.4 18.6 Q46.8 19.2 45.6 19.8 L25.8 26.6 Q24.6 27 23.4 26.6 Z" fill="url(#hth2)"/>
<g clip-path="url(#hch2)"><ellipse cx="28.3" cy="19.5" rx="13" ry="5.4" fill="#a8a8cc" opacity=".55" transform="rotate(4 27.5 19.2)"/><ellipse cx="27.3" cy="19.1" rx="13" ry="5.4" fill="url(#hph2)" transform="rotate(4 27.5 19.2)"/></g>
<path d="M1.6 18 Q1.6 17 3 16.6 L20 12.2 Q21.6 11.8 23 12.2 L45.4 18.6 Q46.8 19.2 45.6 19.8 L25.8 26.6 Q24.6 27 23.4 26.6 Z" fill="none" stroke="#c4c4c8" stroke-width=".7"/>
<path d="M9 17.6 L15.8 15.8 L16.6 16.4 L9.8 18.3 Z" fill="#3c3c3c"/>
<!-- outlines -->
<path d="M1.4 27 L24.7 36.1 L46.9 27.2" fill="none" stroke="#303030" stroke-width="1.2" stroke-linejoin="round"/><path d="M1.5 18.4 L1.5 27" fill="none" stroke="#5a5a5a" stroke-width=".8"/><path d="M46.7 19.6 L46.7 27" stroke="#3c3c3c" stroke-width=".9"/><path d="M24 12.4 L45.6 18.7" stroke="#6a6a6a" stroke-width=".7"/>
<path d="M24.7 27 L24.7 36" stroke="#e8e8f8" stroke-width=".8"/>
<circle cx="3.4" cy="25.4" r=".5" fill="#333"/><circle cx="19" cy="31.6" r=".5" fill="#333"/><circle cx="23.6" cy="25.6" r=".4" fill="#777"/>
</svg>
<svg style="left:469px;top:211px" width="48" height="48" viewBox="0 0 48 48">
<defs>
<linearGradient id="hth3" x1="0" y1="0" x2="1" y2="0"><stop offset="0" stop-color="#c4c4c4"/><stop offset=".3" stop-color="#e4e4e4"/><stop offset=".55" stop-color="#ffffff"/><stop offset=".8" stop-color="#e0e0e4"/><stop offset="1" stop-color="#b8b8c4"/></linearGradient>
<linearGradient id="hph3" x1="0" y1="0" x2="1" y2="0"><stop offset="0" stop-color="#d0d0d0"/><stop offset=".45" stop-color="#ffffff"/><stop offset=".8" stop-color="#e8e8ec"/><stop offset="1" stop-color="#b0b0d0"/></linearGradient>
<linearGradient id="hlh3" x1="0" y1="0" x2="0" y2="1"><stop offset="0" stop-color="#f0f0f0"/><stop offset="1" stop-color="#c4c4c4"/></linearGradient>
<linearGradient id="hdh3" x1="0" y1="0" x2="1" y2="0"><stop offset="0" stop-color="#464646"/><stop offset=".5" stop-color="#707070"/><stop offset="1" stop-color="#9c9c9c"/></linearGradient><linearGradient id="hvh3" x1="0" y1="0" x2="1" y2="0"><stop offset="0" stop-color="#9a9ad6"/><stop offset="1" stop-color="#d6d6f6"/></linearGradient>
<filter id="hbh3" x="-20%" y="-20%" width="140%" height="140%"><feGaussianBlur stdDeviation="1.1"/></filter>
<clipPath id="hch3"><path d="M1.6 18 Q1.6 17 3 16.6 L20 12.2 Q21.6 11.8 23 12.2 L45.4 18.6 Q46.8 19.2 45.6 19.8 L25.8 26.6 Q24.6 27 23.4 26.6 Z"/></clipPath>
</defs>
<path d="M3 26.5 L25 35.5 L46.5 26 L46.5 28 L25 38.6 L2 29 Z" fill="#000" opacity=".4" filter="url(#hbh3)"/>
<!-- left face -->
<path d="M1.4 18 L24.7 26.7 L24.7 36.2 L1.4 27.2 Z" fill="url(#hlh3)"/>
<path d="M1.4 23 L24.7 31.3 L24.7 32.2 L1.4 23.9 Z" fill="#484848"/>
<path d="M1.4 23.9 L24.7 32.2 L24.7 35.4 L1.4 26.4 Z" fill="#f2f2f2"/>
<!-- right face -->
<path d="M24.7 26.7 L46.9 19.3 L46.9 27.2 L24.7 36.2 Z" fill="#3c3c3c"/>
<path d="M25.4 27.2 L35.8 23.7 L35.8 28.4 L25.6 32.2 Z" fill="url(#hdh3)"/>
<path d="M36.2 23.4 L40.7 21.9 L40.7 26.7 L36.2 28.2 Z" fill="#2c2c2c"/>
<path d="M41.2 21.7 L45.9 20 L45.9 25.8 L41.2 27.6 Z" fill="url(#hvh3)"/>
<path d="M25.8 33.2 L41 28.1 L41 29 L25.8 34.2 Z" fill="#a4a4d8"/>
<path d="M28 32.3 l.9 -.3 l0 1.4 l-.9 .3 Z M31 31.3 l.9 -.3 l0 1.4 l-.9 .3 Z M34 30.3 l.9 -.3 l0 1.4 l-.9 .3 Z M37 29.3 l.9 -.3 l0 1.4 l-.9 .3 Z" fill="#3c3c3c"/>
<!-- top face -->
<path d="M1.6 18 Q1.6 17 3 16.6 L20 12.2 Q21.6 11.8 23 12.2 L45.4 18.6 Q46.8 19.2 45.6 19.8 L25.8 26.6 Q24.6 27 23.4 26.6 Z" fill="url(#hth3)"/>
<g clip-path="url(#hch3)"><ellipse cx="28.3" cy="19.5" rx="13" ry="5.4" fill="#a8a8cc" opacity=".55" transform="rotate(4 27.5 19.2)"/><ellipse cx="27.3" cy="19.1" rx="13" ry="5.4" fill="url(#hph3)" transform="rotate(4 27.5 19.2)"/></g>
<path d="M1.6 18 Q1.6 17 3 16.6 L20 12.2 Q21.6 11.8 23 12.2 L45.4 18.6 Q46.8 19.2 45.6 19.8 L25.8 26.6 Q24.6 27 23.4 26.6 Z" fill="none" stroke="#c4c4c8" stroke-width=".7"/>
<path d="M9 17.6 L15.8 15.8 L16.6 16.4 L9.8 18.3 Z" fill="#3c3c3c"/>
<!-- outlines -->
<path d="M1.4 27 L24.7 36.1 L46.9 27.2" fill="none" stroke="#303030" stroke-width="1.2" stroke-linejoin="round"/><path d="M1.5 18.4 L1.5 27" fill="none" stroke="#5a5a5a" stroke-width=".8"/><path d="M46.7 19.6 L46.7 27" stroke="#3c3c3c" stroke-width=".9"/><path d="M24 12.4 L45.6 18.7" stroke="#6a6a6a" stroke-width=".7"/>
<path d="M24.7 27 L24.7 36" stroke="#e8e8f8" stroke-width=".8"/>
<circle cx="3.4" cy="25.4" r=".5" fill="#333"/><circle cx="19" cy="31.6" r=".5" fill="#333"/><circle cx="23.6" cy="25.6" r=".4" fill="#777"/>
</svg>
<svg style="left:242px;top:272px" width="48" height="48" viewBox="0 0 48 48">
<defs>
<linearGradient id="hth4" x1="0" y1="0" x2="1" y2="0"><stop offset="0" stop-color="#c4c4c4"/><stop offset=".3" stop-color="#e4e4e4"/><stop offset=".55" stop-color="#ffffff"/><stop offset=".8" stop-color="#e0e0e4"/><stop offset="1" stop-color="#b8b8c4"/></linearGradient>
<linearGradient id="hph4" x1="0" y1="0" x2="1" y2="0"><stop offset="0" stop-color="#d0d0d0"/><stop offset=".45" stop-color="#ffffff"/><stop offset=".8" stop-color="#e8e8ec"/><stop offset="1" stop-color="#b0b0d0"/></linearGradient>
<linearGradient id="hlh4" x1="0" y1="0" x2="0" y2="1"><stop offset="0" stop-color="#f0f0f0"/><stop offset="1" stop-color="#c4c4c4"/></linearGradient>
<linearGradient id="hdh4" x1="0" y1="0" x2="1" y2="0"><stop offset="0" stop-color="#464646"/><stop offset=".5" stop-color="#707070"/><stop offset="1" stop-color="#9c9c9c"/></linearGradient><linearGradient id="hvh4" x1="0" y1="0" x2="1" y2="0"><stop offset="0" stop-color="#9a9ad6"/><stop offset="1" stop-color="#d6d6f6"/></linearGradient>
<filter id="hbh4" x="-20%" y="-20%" width="140%" height="140%"><feGaussianBlur stdDeviation="1.1"/></filter>
<clipPath id="hch4"><path d="M1.6 18 Q1.6 17 3 16.6 L20 12.2 Q21.6 11.8 23 12.2 L45.4 18.6 Q46.8 19.2 45.6 19.8 L25.8 26.6 Q24.6 27 23.4 26.6 Z"/></clipPath>
</defs>
<path d="M3 26.5 L25 35.5 L46.5 26 L46.5 28 L25 38.6 L2 29 Z" fill="#000" opacity=".4" filter="url(#hbh4)"/>
<!-- left face -->
<path d="M1.4 18 L24.7 26.7 L24.7 36.2 L1.4 27.2 Z" fill="url(#hlh4)"/>
<path d="M1.4 23 L24.7 31.3 L24.7 32.2 L1.4 23.9 Z" fill="#484848"/>
<path d="M1.4 23.9 L24.7 32.2 L24.7 35.4 L1.4 26.4 Z" fill="#f2f2f2"/>
<!-- right face -->
<path d="M24.7 26.7 L46.9 19.3 L46.9 27.2 L24.7 36.2 Z" fill="#3c3c3c"/>
<path d="M25.4 27.2 L35.8 23.7 L35.8 28.4 L25.6 32.2 Z" fill="url(#hdh4)"/>
<path d="M36.2 23.4 L40.7 21.9 L40.7 26.7 L36.2 28.2 Z" fill="#2c2c2c"/>
<path d="M41.2 21.7 L45.9 20 L45.9 25.8 L41.2 27.6 Z" fill="url(#hvh4)"/>
<path d="M25.8 33.2 L41 28.1 L41 29 L25.8 34.2 Z" fill="#a4a4d8"/>
<path d="M28 32.3 l.9 -.3 l0 1.4 l-.9 .3 Z M31 31.3 l.9 -.3 l0 1.4 l-.9 .3 Z M34 30.3 l.9 -.3 l0 1.4 l-.9 .3 Z M37 29.3 l.9 -.3 l0 1.4 l-.9 .3 Z" fill="#3c3c3c"/>
<!-- top face -->
<path d="M1.6 18 Q1.6 17 3 16.6 L20 12.2 Q21.6 11.8 23 12.2 L45.4 18.6 Q46.8 19.2 45.6 19.8 L25.8 26.6 Q24.6 27 23.4 26.6 Z" fill="url(#hth4)"/>
<g clip-path="url(#hch4)"><ellipse cx="28.3" cy="19.5" rx="13" ry="5.4" fill="#a8a8cc" opacity=".55" transform="rotate(4 27.5 19.2)"/><ellipse cx="27.3" cy="19.1" rx="13" ry="5.4" fill="url(#hph4)" transform="rotate(4 27.5 19.2)"/></g>
<path d="M1.6 18 Q1.6 17 3 16.6 L20 12.2 Q21.6 11.8 23 12.2 L45.4 18.6 Q46.8 19.2 45.6 19.8 L25.8 26.6 Q24.6 27 23.4 26.6 Z" fill="none" stroke="#c4c4c8" stroke-width=".7"/>
<path d="M9 17.6 L15.8 15.8 L16.6 16.4 L9.8 18.3 Z" fill="#3c3c3c"/>
<!-- outlines -->
<path d="M1.4 27 L24.7 36.1 L46.9 27.2" fill="none" stroke="#303030" stroke-width="1.2" stroke-linejoin="round"/><path d="M1.5 18.4 L1.5 27" fill="none" stroke="#5a5a5a" stroke-width=".8"/><path d="M46.7 19.6 L46.7 27" stroke="#3c3c3c" stroke-width=".9"/><path d="M24 12.4 L45.6 18.7" stroke="#6a6a6a" stroke-width=".7"/>
<path d="M24.7 27 L24.7 36" stroke="#e8e8f8" stroke-width=".8"/>
<circle cx="3.4" cy="25.4" r=".5" fill="#333"/><circle cx="19" cy="31.6" r=".5" fill="#333"/><circle cx="23.6" cy="25.6" r=".4" fill="#777"/>
</svg>
<svg style="left:469px;top:272px" width="48" height="48" viewBox="0 0 48 48">
<defs>
<linearGradient id="hth5" x1="0" y1="0" x2="1" y2="0"><stop offset="0" stop-color="#c4c4c4"/><stop offset=".3" stop-color="#e4e4e4"/><stop offset=".55" stop-color="#ffffff"/><stop offset=".8" stop-color="#e0e0e4"/><stop offset="1" stop-color="#b8b8c4"/></linearGradient>
<linearGradient id="hph5" x1="0" y1="0" x2="1" y2="0"><stop offset="0" stop-color="#d0d0d0"/><stop offset=".45" stop-color="#ffffff"/><stop offset=".8" stop-color="#e8e8ec"/><stop offset="1" stop-color="#b0b0d0"/></linearGradient>
<linearGradient id="hlh5" x1="0" y1="0" x2="0" y2="1"><stop offset="0" stop-color="#f0f0f0"/><stop offset="1" stop-color="#c4c4c4"/></linearGradient>
<linearGradient id="hdh5" x1="0" y1="0" x2="1" y2="0"><stop offset="0" stop-color="#464646"/><stop offset=".5" stop-color="#707070"/><stop offset="1" stop-color="#9c9c9c"/></linearGradient><linearGradient id="hvh5" x1="0" y1="0" x2="1" y2="0"><stop offset="0" stop-color="#9a9ad6"/><stop offset="1" stop-color="#d6d6f6"/></linearGradient>
<filter id="hbh5" x="-20%" y="-20%" width="140%" height="140%"><feGaussianBlur stdDeviation="1.1"/></filter>
<clipPath id="hch5"><path d="M1.6 18 Q1.6 17 3 16.6 L20 12.2 Q21.6 11.8 23 12.2 L45.4 18.6 Q46.8 19.2 45.6 19.8 L25.8 26.6 Q24.6 27 23.4 26.6 Z"/></clipPath>
</defs>
<path d="M3 26.5 L25 35.5 L46.5 26 L46.5 28 L25 38.6 L2 29 Z" fill="#000" opacity=".4" filter="url(#hbh5)"/>
<!-- left face -->
<path d="M1.4 18 L24.7 26.7 L24.7 36.2 L1.4 27.2 Z" fill="url(#hlh5)"/>
<path d="M1.4 23 L24.7 31.3 L24.7 32.2 L1.4 23.9 Z" fill="#484848"/>
<path d="M1.4 23.9 L24.7 32.2 L24.7 35.4 L1.4 26.4 Z" fill="#f2f2f2"/>
<!-- right face -->
<path d="M24.7 26.7 L46.9 19.3 L46.9 27.2 L24.7 36.2 Z" fill="#3c3c3c"/>
<path d="M25.4 27.2 L35.8 23.7 L35.8 28.4 L25.6 32.2 Z" fill="url(#hdh5)"/>
<path d="M36.2 23.4 L40.7 21.9 L40.7 26.7 L36.2 28.2 Z" fill="#2c2c2c"/>
<path d="M41.2 21.7 L45.9 20 L45.9 25.8 L41.2 27.6 Z" fill="url(#hvh5)"/>
<path d="M25.8 33.2 L41 28.1 L41 29 L25.8 34.2 Z" fill="#a4a4d8"/>
<path d="M28 32.3 l.9 -.3 l0 1.4 l-.9 .3 Z M31 31.3 l.9 -.3 l0 1.4 l-.9 .3 Z M34 30.3 l.9 -.3 l0 1.4 l-.9 .3 Z M37 29.3 l.9 -.3 l0 1.4 l-.9 .3 Z" fill="#3c3c3c"/>
<!-- top face -->
<path d="M1.6 18 Q1.6 17 3 16.6 L20 12.2 Q21.6 11.8 23 12.2 L45.4 18.6 Q46.8 19.2 45.6 19.8 L25.8 26.6 Q24.6 27 23.4 26.6 Z" fill="url(#hth5)"/>
<g clip-path="url(#hch5)"><ellipse cx="28.3" cy="19.5" rx="13" ry="5.4" fill="#a8a8cc" opacity=".55" transform="rotate(4 27.5 19.2)"/><ellipse cx="27.3" cy="19.1" rx="13" ry="5.4" fill="url(#hph5)" transform="rotate(4 27.5 19.2)"/></g>
<path d="M1.6 18 Q1.6 17 3 16.6 L20 12.2 Q21.6 11.8 23 12.2 L45.4 18.6 Q46.8 19.2 45.6 19.8 L25.8 26.6 Q24.6 27 23.4 26.6 Z" fill="none" stroke="#c4c4c8" stroke-width=".7"/>
<path d="M9 17.6 L15.8 15.8 L16.6 16.4 L9.8 18.3 Z" fill="#3c3c3c"/>
<!-- outlines -->
<path d="M1.4 27 L24.7 36.1 L46.9 27.2" fill="none" stroke="#303030" stroke-width="1.2" stroke-linejoin="round"/><path d="M1.5 18.4 L1.5 27" fill="none" stroke="#5a5a5a" stroke-width=".8"/><path d="M46.7 19.6 L46.7 27" stroke="#3c3c3c" stroke-width=".9"/><path d="M24 12.4 L45.6 18.7" stroke="#6a6a6a" stroke-width=".7"/>
<path d="M24.7 27 L24.7 36" stroke="#e8e8f8" stroke-width=".8"/>
<circle cx="3.4" cy="25.4" r=".5" fill="#333"/><circle cx="19" cy="31.6" r=".5" fill="#333"/><circle cx="23.6" cy="25.6" r=".4" fill="#777"/>
</svg>
<svg style="left:242px;top:333px" width="48" height="48" viewBox="0 0 48 48">
<defs>
<linearGradient id="hth6" x1="0" y1="0" x2="1" y2="0"><stop offset="0" stop-color="#c4c4c4"/><stop offset=".3" stop-color="#e4e4e4"/><stop offset=".55" stop-color="#ffffff"/><stop offset=".8" stop-color="#e0e0e4"/><stop offset="1" stop-color="#b8b8c4"/></linearGradient>
<linearGradient id="hph6" x1="0" y1="0" x2="1" y2="0"><stop offset="0" stop-color="#d0d0d0"/><stop offset=".45" stop-color="#ffffff"/><stop offset=".8" stop-color="#e8e8ec"/><stop offset="1" stop-color="#b0b0d0"/></linearGradient>
<linearGradient id="hlh6" x1="0" y1="0" x2="0" y2="1"><stop offset="0" stop-color="#f0f0f0"/><stop offset="1" stop-color="#c4c4c4"/></linearGradient>
<linearGradient id="hdh6" x1="0" y1="0" x2="1" y2="0"><stop offset="0" stop-color="#464646"/><stop offset=".5" stop-color="#707070"/><stop offset="1" stop-color="#9c9c9c"/></linearGradient><linearGradient id="hvh6" x1="0" y1="0" x2="1" y2="0"><stop offset="0" stop-color="#9a9ad6"/><stop offset="1" stop-color="#d6d6f6"/></linearGradient>
<filter id="hbh6" x="-20%" y="-20%" width="140%" height="140%"><feGaussianBlur stdDeviation="1.1"/></filter>
<clipPath id="hch6"><path d="M1.6 18 Q1.6 17 3 16.6 L20 12.2 Q21.6 11.8 23 12.2 L45.4 18.6 Q46.8 19.2 45.6 19.8 L25.8 26.6 Q24.6 27 23.4 26.6 Z"/></clipPath>
</defs>
<path d="M3 26.5 L25 35.5 L46.5 26 L46.5 28 L25 38.6 L2 29 Z" fill="#000" opacity=".4" filter="url(#hbh6)"/>
<!-- left face -->
<path d="M1.4 18 L24.7 26.7 L24.7 36.2 L1.4 27.2 Z" fill="url(#hlh6)"/>
<path d="M1.4 23 L24.7 31.3 L24.7 32.2 L1.4 23.9 Z" fill="#484848"/>
<path d="M1.4 23.9 L24.7 32.2 L24.7 35.4 L1.4 26.4 Z" fill="#f2f2f2"/>
<!-- right face -->
<path d="M24.7 26.7 L46.9 19.3 L46.9 27.2 L24.7 36.2 Z" fill="#3c3c3c"/>
<path d="M25.4 27.2 L35.8 23.7 L35.8 28.4 L25.6 32.2 Z" fill="url(#hdh6)"/>
<path d="M36.2 23.4 L40.7 21.9 L40.7 26.7 L36.2 28.2 Z" fill="#2c2c2c"/>
<path d="M41.2 21.7 L45.9 20 L45.9 25.8 L41.2 27.6 Z" fill="url(#hvh6)"/>
<path d="M25.8 33.2 L41 28.1 L41 29 L25.8 34.2 Z" fill="#a4a4d8"/>
<path d="M28 32.3 l.9 -.3 l0 1.4 l-.9 .3 Z M31 31.3 l.9 -.3 l0 1.4 l-.9 .3 Z M34 30.3 l.9 -.3 l0 1.4 l-.9 .3 Z M37 29.3 l.9 -.3 l0 1.4 l-.9 .3 Z" fill="#3c3c3c"/>
<!-- top face -->
<path d="M1.6 18 Q1.6 17 3 16.6 L20 12.2 Q21.6 11.8 23 12.2 L45.4 18.6 Q46.8 19.2 45.6 19.8 L25.8 26.6 Q24.6 27 23.4 26.6 Z" fill="url(#hth6)"/>
<g clip-path="url(#hch6)"><ellipse cx="28.3" cy="19.5" rx="13" ry="5.4" fill="#a8a8cc" opacity=".55" transform="rotate(4 27.5 19.2)"/><ellipse cx="27.3" cy="19.1" rx="13" ry="5.4" fill="url(#hph6)" transform="rotate(4 27.5 19.2)"/></g>
<path d="M1.6 18 Q1.6 17 3 16.6 L20 12.2 Q21.6 11.8 23 12.2 L45.4 18.6 Q46.8 19.2 45.6 19.8 L25.8 26.6 Q24.6 27 23.4 26.6 Z" fill="none" stroke="#c4c4c8" stroke-width=".7"/>
<path d="M9 17.6 L15.8 15.8 L16.6 16.4 L9.8 18.3 Z" fill="#3c3c3c"/>
<!-- outlines -->
<path d="M1.4 27 L24.7 36.1 L46.9 27.2" fill="none" stroke="#303030" stroke-width="1.2" stroke-linejoin="round"/><path d="M1.5 18.4 L1.5 27" fill="none" stroke="#5a5a5a" stroke-width=".8"/><path d="M46.7 19.6 L46.7 27" stroke="#3c3c3c" stroke-width=".9"/><path d="M24 12.4 L45.6 18.7" stroke="#6a6a6a" stroke-width=".7"/>
<path d="M24.7 27 L24.7 36" stroke="#e8e8f8" stroke-width=".8"/>
<circle cx="3.4" cy="25.4" r=".5" fill="#333"/><circle cx="19" cy="31.6" r=".5" fill="#333"/><circle cx="23.6" cy="25.6" r=".4" fill="#777"/>
</svg>
<svg style="left:242px;top:424px" width="48" height="50" viewBox="0 0 48 50">
<defs>
<linearGradient id="cfrc1" x1="0" y1="0" x2="1" y2="0"><stop offset="0" stop-color="#ff7a00"/><stop offset=".45" stop-color="#f4f400"/><stop offset="1" stop-color="#44b020"/></linearGradient>
<linearGradient id="cfbc1" x1="0" y1="0" x2="1" y2="0"><stop offset="0" stop-color="#2c3098"/><stop offset=".5" stop-color="#2a2a90"/><stop offset="1" stop-color="#9c1010"/></linearGradient>
<linearGradient id="cffc1" x1="0" y1="0" x2="1" y2="0"><stop offset="0" stop-color="#4c4c4c"/><stop offset=".05" stop-color="#9a9a9a"/><stop offset=".1" stop-color="#5a5a5a"/><stop offset=".14" stop-color="#3c3c3c"/><stop offset="1" stop-color="#3a3a3a"/></linearGradient>
</defs>
<path d="M6 6.7 L42.7 2.3 L42.7 38.3 L6 47.3 Z" fill="url(#cffc1)" stroke="#3a3a3a" stroke-width=".8" stroke-linejoin="round"/>
<path d="M11 10 L39.3 5.4 L39.3 37 L11 44.3 Z" fill="#ff3300"/>
<path d="M11.3 10 L19.3 8.7 L19.3 14.6 L11.3 15.2 Z" fill="url(#cfrc1)"/>
<path d="M19.7 8.6 L32 6.6 L32 18.6 L19.7 19.6 Z" fill="#333399"/>
<path d="M32 6.6 L39.3 5.4 L39.3 10.4 L32 11.2 Z" fill="url(#cfbc1)"/>
<path d="M11 32.4 L32.7 26.8 L32.7 33.8 L11 38.6 Z" fill="#0c3aa0"/>
<path d="M11 39 L29 34.8 L29 39.2 L11 43.6 Z" fill="#ffcc00"/>
<text x="11.5" y="37.9" font-family="'Liberation Sans',sans-serif" font-size="8" font-weight="700" font-style="italic" fill="#fff" transform="rotate(-13.5 11.5 37.9)" textLength="20.8" lengthAdjust="spacingAndGlyphs">CompactFlash</text>
</svg>
<svg style="left:242px;top:515px" width="48" height="48" viewBox="0 0 48 48" opacity=".46">
<defs>
<linearGradient id="hthf" x1="0" y1="0" x2="1" y2="0"><stop offset="0" stop-color="#c4c4c4"/><stop offset=".3" stop-color="#e4e4e4"/><stop offset=".55" stop-color="#ffffff"/><stop offset=".8" stop-color="#e0e0e4"/><stop offset="1" stop-color="#b8b8c4"/></linearGradient>
<linearGradient id="hphf" x1="0" y1="0" x2="1" y2="0"><stop offset="0" stop-color="#d0d0d0"/><stop offset=".45" stop-color="#ffffff"/><stop offset=".8" stop-color="#e8e8ec"/><stop offset="1" stop-color="#b0b0d0"/></linearGradient>
<linearGradient id="hlhf" x1="0" y1="0" x2="0" y2="1"><stop offset="0" stop-color="#f0f0f0"/><stop offset="1" stop-color="#c4c4c4"/></linearGradient>
<linearGradient id="hdhf" x1="0" y1="0" x2="1" y2="0"><stop offset="0" stop-color="#464646"/><stop offset=".5" stop-color="#707070"/><stop offset="1" stop-color="#9c9c9c"/></linearGradient><linearGradient id="hvhf" x1="0" y1="0" x2="1" y2="0"><stop offset="0" stop-color="#9a9ad6"/><stop offset="1" stop-color="#d6d6f6"/></linearGradient>
<filter id="hbhf" x="-20%" y="-20%" width="140%" height="140%"><feGaussianBlur stdDeviation="1.1"/></filter>
<clipPath id="hchf"><path d="M1.6 18 Q1.6 17 3 16.6 L20 12.2 Q21.6 11.8 23 12.2 L45.4 18.6 Q46.8 19.2 45.6 19.8 L25.8 26.6 Q24.6 27 23.4 26.6 Z"/></clipPath>
</defs>
<path d="M3 26.5 L25 35.5 L46.5 26 L46.5 28 L25 38.6 L2 29 Z" fill="#000" opacity=".4" filter="url(#hbhf)"/>
<!-- left face -->
<path d="M1.4 18 L24.7 26.7 L24.7 36.2 L1.4 27.2 Z" fill="url(#hlhf)"/>
<path d="M1.4 23 L24.7 31.3 L24.7 32.2 L1.4 23.9 Z" fill="#484848"/>
<path d="M1.4 23.9 L24.7 32.2 L24.7 35.4 L1.4 26.4 Z" fill="#f2f2f2"/>
<!-- right face -->
<path d="M24.7 26.7 L46.9 19.3 L46.9 27.2 L24.7 36.2 Z" fill="#3c3c3c"/>
<path d="M25.4 27.2 L35.8 23.7 L35.8 28.4 L25.6 32.2 Z" fill="url(#hdhf)"/>
<path d="M36.2 23.4 L40.7 21.9 L40.7 26.7 L36.2 28.2 Z" fill="#2c2c2c"/>
<path d="M41.2 21.7 L45.9 20 L45.9 25.8 L41.2 27.6 Z" fill="url(#hvhf)"/>
<path d="M25.8 33.2 L41 28.1 L41 29 L25.8 34.2 Z" fill="#a4a4d8"/>
<path d="M28 32.3 l.9 -.3 l0 1.4 l-.9 .3 Z M31 31.3 l.9 -.3 l0 1.4 l-.9 .3 Z M34 30.3 l.9 -.3 l0 1.4 l-.9 .3 Z M37 29.3 l.9 -.3 l0 1.4 l-.9 .3 Z" fill="#3c3c3c"/>
<!-- top face -->
<path d="M1.6 18 Q1.6 17 3 16.6 L20 12.2 Q21.6 11.8 23 12.2 L45.4 18.6 Q46.8 19.2 45.6 19.8 L25.8 26.6 Q24.6 27 23.4 26.6 Z" fill="url(#hthf)"/>
<g clip-path="url(#hchf)"><ellipse cx="28.3" cy="19.5" rx="13" ry="5.4" fill="#a8a8cc" opacity=".55" transform="rotate(4 27.5 19.2)"/><ellipse cx="27.3" cy="19.1" rx="13" ry="5.4" fill="url(#hphf)" transform="rotate(4 27.5 19.2)"/></g>
<path d="M1.6 18 Q1.6 17 3 16.6 L20 12.2 Q21.6 11.8 23 12.2 L45.4 18.6 Q46.8 19.2 45.6 19.8 L25.8 26.6 Q24.6 27 23.4 26.6 Z" fill="none" stroke="#c4c4c8" stroke-width=".7"/>
<path d="M9 17.6 L15.8 15.8 L16.6 16.4 L9.8 18.3 Z" fill="#3c3c3c"/>
<!-- outlines -->
<path d="M1.4 27 L24.7 36.1 L46.9 27.2" fill="none" stroke="#303030" stroke-width="1.2" stroke-linejoin="round"/><path d="M1.5 18.4 L1.5 27" fill="none" stroke="#5a5a5a" stroke-width=".8"/><path d="M46.7 19.6 L46.7 27" stroke="#3c3c3c" stroke-width=".9"/><path d="M24 12.4 L45.6 18.7" stroke="#6a6a6a" stroke-width=".7"/>
<path d="M24.7 27 L24.7 36" stroke="#e8e8f8" stroke-width=".8"/>
<circle cx="3.4" cy="25.4" r=".5" fill="#333"/><circle cx="19" cy="31.6" r=".5" fill="#333"/><circle cx="23.6" cy="25.6" r=".4" fill="#777"/>
</svg>
<svg style="left:469px;top:515px" width="48" height="50" viewBox="0 0 48 50">
<defs>
<linearGradient id="cfrc2" x1="0" y1="0" x2="1" y2="0"><stop offset="0" stop-color="#ff7a00"/><stop offset=".45" stop-color="#f4f400"/><stop offset="1" stop-color="#44b020"/></linearGradient>
<linearGradient id="cfbc2" x1="0" y1="0" x2="1" y2="0"><stop offset="0" stop-color="#2c3098"/><stop offset=".5" stop-color="#2a2a90"/><stop offset="1" stop-color="#9c1010"/></linearGradient>
<linearGradient id="cffc2" x1="0" y1="0" x2="1" y2="0"><stop offset="0" stop-color="#4c4c4c"/><stop offset=".05" stop-color="#9a9a9a"/><stop offset=".1" stop-color="#5a5a5a"/><stop offset=".14" stop-color="#3c3c3c"/><stop offset="1" stop-color="#3a3a3a"/></linearGradient>
</defs>
<path d="M6 6.7 L42.7 2.3 L42.7 38.3 L6 47.3 Z" fill="url(#cffc2)" stroke="#3a3a3a" stroke-width=".8" stroke-linejoin="round"/>
<path d="M11 10 L39.3 5.4 L39.3 37 L11 44.3 Z" fill="#ff3300"/>
<path d="M11.3 10 L19.3 8.7 L19.3 14.6 L11.3 15.2 Z" fill="url(#cfrc2)"/>
<path d="M19.7 8.6 L32 6.6 L32 18.6 L19.7 19.6 Z" fill="#333399"/>
<path d="M32 6.6 L39.3 5.4 L39.3 10.4 L32 11.2 Z" fill="url(#cfbc2)"/>
<path d="M11 32.4 L32.7 26.8 L32.7 33.8 L11 38.6 Z" fill="#0c3aa0"/>
<path d="M11 39 L29 34.8 L29 39.2 L11 43.6 Z" fill="#ffcc00"/>
<text x="11.5" y="37.9" font-family="'Liberation Sans',sans-serif" font-size="8" font-weight="700" font-style="italic" fill="#fff" transform="rotate(-13.5 11.5 37.9)" textLength="20.8" lengthAdjust="spacingAndGlyphs">CompactFlash</text>
</svg>
<span class="t" id="t0" style="left:30.00px;top:6px;font-size:11.5px;font-weight:400;color:#12105c;transform:scaleX(1.0288);-webkit-text-stroke:.12px">HDD Mechanic 1.3 [Evaluation version]</span>
<span class="t" id="t1" style="left:16.00px;top:28px;font-size:11.5px;font-weight:400;color:#1c1870;transform:scaleX(1.0095);-webkit-text-stroke:.12px">Drives</span>
<span class="t" id="t2" style="left:59.00px;top:28px;font-size:11.5px;font-weight:400;color:#1c1870;transform:scaleX(1.0084);-webkit-text-stroke:.12px">View</span>
<span class="t" id="t3" style="left:93.00px;top:28px;font-size:11.5px;font-weight:400;color:#1c1870;transform:scaleX(1.0781);-webkit-text-stroke:.12px">Commands</span>
<span class="t" id="t4" style="left:165.00px;top:28px;font-size:11.5px;font-weight:400;color:#1c1870;transform:scaleX(1.1039);-webkit-text-stroke:.12px">Help</span>
<span class="t" id="t5" style="left:42.00px;top:60px;font-size:11.5px;font-weight:400;color:#b2b2bc;transform:scaleX(1.0051);-webkit-text-stroke:.12px">Back</span>
<span class="t" id="t6" style="left:155.00px;top:60px;font-size:11.5px;font-weight:400;color:#14142c;transform:scaleX(0.9894);-webkit-text-stroke:.12px">Search</span>
<span class="t" id="t7" style="left:225.00px;top:60px;font-size:11.5px;font-weight:400;color:#14142c;transform:scaleX(1.0328);-webkit-text-stroke:.12px">Folders</span>
<span class="t" id="t8" style="left:305.00px;top:60px;font-size:11.5px;font-weight:400;color:#14142c;transform:scaleX(1.0088);-webkit-text-stroke:.12px">Wizard</span>
<span class="t" id="t9" style="left:12.00px;top:93px;font-size:11.5px;font-weight:400;color:#000;transform:scaleX(0.9919);-webkit-text-stroke:.12px">Address bar:</span>
<span class="t" id="t10" style="left:93.00px;top:93px;font-size:11.5px;font-weight:400;color:#000;transform:scaleX(1.0108);-webkit-text-stroke:.12px">My Computer</span>
<span class="t" id="t11" style="left:826.00px;top:93px;font-size:11.5px;font-weight:400;color:#14142c;transform:scaleX(0.9707);-webkit-text-stroke:.12px">Go</span>
<span class="t" id="t12" style="left:24.00px;top:135px;font-size:11.5px;font-weight:700;color:#2c54d0;transform:scaleX(0.9426);-webkit-text-stroke:.06px">File and folder tasks</span>
<span class="t" id="t13" style="left:50.00px;top:163px;font-size:11.5px;font-weight:400;color:#2c52d2;transform:scaleX(1.0654);-webkit-text-stroke:.12px">Open</span>
<span class="t" id="t14" style="left:50.00px;top:183px;font-size:11.5px;font-weight:400;color:#2c52d2;transform:scaleX(0.9643);-webkit-text-stroke:.12px">Create Image</span>
<span class="t" id="t15" style="left:50.00px;top:203px;font-size:11.5px;font-weight:400;color:#2c52d2;transform:scaleX(0.9890);-webkit-text-stroke:.12px">Properties</span>
<span class="t" id="t16" style="left:24.00px;top:251px;font-size:11.5px;font-weight:700;color:#2c54d0;transform:scaleX(0.9348);-webkit-text-stroke:.06px">Common Places</span>
<span class="t" id="t17" style="left:50.00px;top:279px;font-size:11.5px;font-weight:400;color:#2c52d2;transform:scaleX(1.0051);-webkit-text-stroke:.12px">My Computer</span>
<span class="t" id="t18" style="left:24.00px;top:327px;font-size:11.5px;font-weight:700;color:#2c54d0;transform:scaleX(0.9514);-webkit-text-stroke:.06px">Details</span>
<span class="t" id="t19" style="left:27.00px;top:354px;font-size:11.5px;font-weight:700;color:#000;transform:scaleX(0.9469);-webkit-text-stroke:.06px">SAMSUNG HD251HJ</span>
<span class="t" id="t20" style="left:27.00px;top:375px;font-size:11.5px;font-weight:400;color:#000;transform:scaleX(0.9557);-webkit-text-stroke:.12px">File System:</span>
<span class="t" id="t21" style="left:7.00px;top:656px;font-size:11.5px;font-weight:400;color:#000;transform:scaleX(0.9738);-webkit-text-stroke:.12px">SAMSUNG HD251HJ</span>
<span class="t" id="t22" style="left:245.00px;top:120px;font-size:11px;font-weight:700;color:#000;transform:scaleX(1.0726);-webkit-text-stroke:.06px">Hard Disk Drives</span>
<span class="t" id="t23" style="left:245.00px;top:394px;font-size:11px;font-weight:700;color:#000;transform:scaleX(1.0887);-webkit-text-stroke:.06px">Drives with Removeable Storage</span>
<span class="t" id="t24" style="left:245.00px;top:485px;font-size:11px;font-weight:700;color:#000;transform:scaleX(1.0618);-webkit-text-stroke:.06px">Physical drives</span>
<span class="t" id="t25" style="left:297.00px;top:161px;font-size:11px;font-weight:400;color:#000;transform:scaleX(0.9915);-webkit-text-stroke:.2px">C: (Spicy)</span>
<span class="t" id="t26" style="left:298.00px;top:174px;font-size:11px;font-weight:400;color:#000;transform:scaleX(0.9599);-webkit-text-stroke:.2px">17,30 Gb</span>
<span class="t" id="t27" style="left:524.00px;top:161px;font-size:11px;font-weight:400;color:#000;transform:scaleX(0.9915);-webkit-text-stroke:.2px">C: (Spicy)</span>
<span class="t" id="t28" style="left:525.00px;top:174px;font-size:11px;font-weight:400;color:#000;transform:scaleX(0.9599);-webkit-text-stroke:.2px">17,30 Gb</span>
<span class="t" id="t29" style="left:297.00px;top:222px;font-size:11px;font-weight:400;color:#000;transform:scaleX(0.9938);-webkit-text-stroke:.2px">D: (Collector)</span>
<span class="t" id="t30" style="left:298.00px;top:235px;font-size:11px;font-weight:400;color:#000;transform:scaleX(0.9726);-webkit-text-stroke:.2px">125,00 Gb</span>
<span class="t" id="t31" style="left:524.00px;top:222px;font-size:11px;font-weight:400;color:#000;transform:scaleX(1.0340);-webkit-text-stroke:.2px">E: (Worst)</span>
<span class="t" id="t32" style="left:524.00px;top:235px;font-size:11px;font-weight:400;color:#000;transform:scaleX(0.9861);-webkit-text-stroke:.2px">8,01 Gb</span>
<span class="t" id="t33" style="left:297.00px;top:283px;font-size:11px;font-weight:400;color:#000;transform:scaleX(0.9856);-webkit-text-stroke:.2px">G: (Dharma)</span>
<span class="t" id="t34" style="left:298.00px;top:296px;font-size:11px;font-weight:400;color:#000;transform:scaleX(0.9802);-webkit-text-stroke:.2px">11,05 Gb</span>
<span class="t" id="t35" style="left:524.00px;top:283px;font-size:11px;font-weight:400;color:#000;transform:scaleX(0.9299);-webkit-text-stroke:.2px">NTFS Volume 1</span>
<span class="t" id="t36" style="left:525.00px;top:296px;font-size:11px;font-weight:400;color:#000;transform:scaleX(0.9802);-webkit-text-stroke:.2px">11,05 Gb</span>
<span class="t" id="t37" style="left:297.00px;top:344px;font-size:11px;font-weight:400;color:#000;transform:scaleX(0.9318);-webkit-text-stroke:.2px">R: (FLEET)</span>
<span class="t" id="t38" style="left:297.00px;top:357px;font-size:11px;font-weight:400;color:#000;transform:scaleX(0.9800);-webkit-text-stroke:.2px">71,53 Gb</span>
<span class="t" id="t39" style="left:297.00px;top:435px;font-size:11px;font-weight:400;color:#000;transform:scaleX(0.9468);-webkit-text-stroke:.2px">K: (NO NAME)</span>
<span class="t" id="t40" style="left:298.00px;top:448px;font-size:11px;font-weight:400;color:#000;transform:scaleX(0.9601);-webkit-text-stroke:.2px">1,96 Gb</span>
<span class="t" id="t41" style="left:297.00px;top:526px;font-size:11px;font-weight:400;color:#000;transform:scaleX(0.8959);-webkit-text-stroke:.2px">SAMSUNG HD251HJ</span>
<span class="t" id="t42" style="left:297.00px;top:539px;font-size:11px;font-weight:400;color:#000;transform:scaleX(0.9833);-webkit-text-stroke:.2px">232,89 Gb</span>
<span class="t" id="t43" style="left:524.00px;top:526px;font-size:11px;font-weight:400;color:#000;transform:scaleX(0.9291);-webkit-text-stroke:.2px">Flash Disk</span>
<span class="t" id="t44" style="left:525.00px;top:539px;font-size:11px;font-weight:400;color:#000;transform:scaleX(0.9601);-webkit-text-stroke:.2px">1,96 Gb</span>
</body></html>
